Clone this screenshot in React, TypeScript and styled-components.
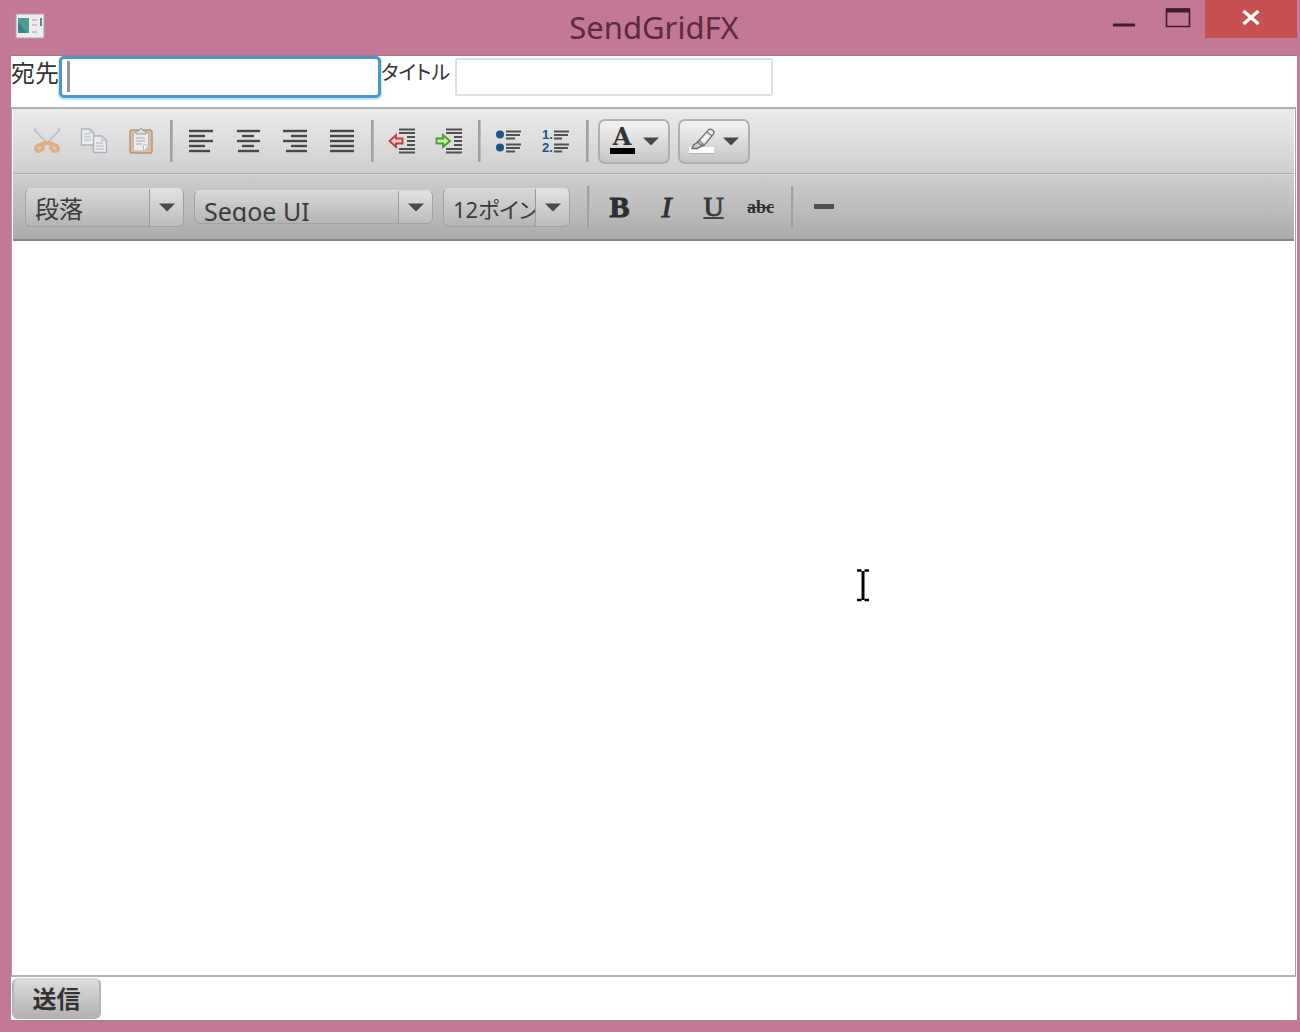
import React from "react";
import styled, { createGlobalStyle } from "styled-components";

const uiFont = `"Noto Sans", "Noto Sans CJK JP", sans-serif`;

const GlobalStyle = createGlobalStyle`
  *, *::before, *::after { box-sizing: border-box; }
  body { margin: 0; font-family: ${uiFont}; color: #333; }
  button, input, select, textarea { font: inherit; color: inherit; margin: 0; }
`;

const Window = styled.div`
  display: flex;
  flex-direction: column;
  min-height: 100vh;
  padding: 0 3px 11px 11px;
  background: #c37895;
`;

const TitleBar = styled.header`
  display: grid;
  grid-template-columns: 1fr auto 1fr;
  height: 56px;
  border-bottom: 1px solid #a3718a;
`;

const AppIcon = styled.svg`
  width: 30px;
  height: 26px;
  margin: 13px 4px;
`;

const WindowTitle = styled.h1`
  margin: 0;
  font-size: 31px;
  font-weight: 400;
  line-height: 54px;
  color: #5a2b42;
`;

const WindowControls = styled.div`
  display: flex;
  justify-content: flex-end;
  align-items: flex-start;
`;

const WindowButton = styled.button<{ $danger?: boolean }>`
  display: flex;
  align-items: center;
  justify-content: center;
  width: ${(p) => (p.$danger ? 92 : 54)}px;
  height: ${(p) => (p.$danger ? 38 : 36)}px;
  padding: 0;
  border: 0;
  background: ${(p) => (p.$danger ? "#c75050" : "transparent")};
`;

const Client = styled.main`
  display: flex;
  flex: 1;
  flex-direction: column;
  background: #fff;
  border-bottom: 1px solid #a97d92;
`;

const AddressRow = styled.div`
  display: flex;
  align-items: flex-start;
  height: 51px;
`;

const FieldLabel = styled.label<{ $width: number; $compact?: boolean }>`
  width: ${(p) => p.$width}px;
  font-size: ${(p) => (p.$compact ? 20 : 24)}px;
  line-height: 34px;
  white-space: nowrap;
  font-feature-settings: "palt";
`;

const FieldWrap = styled.div`
  position: relative;
`;

const TextField = styled.input<{ $active?: boolean }>`
  display: block;
  width: ${(p) => (p.$active ? 322 : 318)}px;
  height: ${(p) => (p.$active ? 42 : 38)}px;
  margin-top: ${(p) => (p.$active ? 0 : 2)}px;
  padding: 0 8px;
  font-size: 24px;
  background: #fff;
  border: ${(p) => (p.$active ? "3px solid #5095ca" : "2px solid #dfdfe2")};
  border-radius: ${(p) => (p.$active ? 5 : 2)}px;
  box-shadow: ${(p) => (p.$active ? "0 1px 1px 1px #b9ecfb" : "none")};
  outline: none;
`;

const Caret = styled.span`
  position: absolute;
  left: 8px;
  top: 5px;
  width: 3px;
  height: 31px;
  background: #97979b;
`;

const Editor = styled.section`
  display: flex;
  flex: 1;
  flex-direction: column;
  position: relative;
  margin-right: 1px;
  border: 1px solid #a3a3a3;
  border-top: 2px solid #b0b0b0;
  border-bottom: 2px solid #b4b4b4;
`;

const Toolbar = styled.div<{ $dark?: boolean }>`
  display: flex;
  align-items: center;
  height: ${(p) => (p.$dark ? 67 : 65)}px;
  margin: 0 1px;
  padding: 0 12px 0 ${(p) => (p.$dark ? 12 : 10)}px;
  background: ${(p) =>
    p.$dark
      ? "linear-gradient(#cecece, #acacac)"
      : "linear-gradient(#ebebeb, #cfcfcf)"};
  border-bottom: ${(p) => (p.$dark ? "2px solid #858585" : "1px solid #aaa")};
  border-top: ${(p) => (p.$dark ? "1px solid #dadada" : "0")};
`;

const separatorMargins = {
  icons: "0 4px 0 6px",
  menus: "0 9px 0 7px",
  styles: "0 6px 0 7px",
};

const Separator = styled.span<{ $before: keyof typeof separatorMargins }>`
  width: 3px;
  height: 42px;
  margin: ${(p) => separatorMargins[p.$before]};
  background: #a0a0a0;
  border-right: 1px solid #b8b8b8;
`;

const ToolButton = styled.button`
  display: flex;
  align-items: center;
  justify-content: center;
  width: 47px;
  height: 40px;
  padding: 0;
  border: 0;
  background: transparent;
`;

const Glyph = styled.span<{ $small?: boolean }>`
  font-family: "Liberation Serif", serif;
  font-size: ${(p) => (p.$small ? 18 : 30)}px;
  line-height: 32px;
  font-weight: 700;
  color: #2e2e2e;

  b& { -webkit-text-stroke: 1px #2e2e2e; }
  i& { font-weight: 400; -webkit-text-stroke: 1px #333; }
  u& {
    font-size: 28px;
    font-weight: 400;
    text-decoration-thickness: 2px;
    -webkit-text-stroke: 1px #444;
  }
`;

const ColorButton = styled.button`
  display: flex;
  align-items: center;
  justify-content: center;
  gap: 8px;
  width: 72px;
  height: 45px;
  margin-right: 8px;
  padding: 0;
  background: linear-gradient(#f3f3f3, #c6c6c6);
  border: 2px solid #b0b0b0;
  border-radius: 7px;
`;

const Swatch = styled.span`
  display: flex;
  flex-direction: column;
  width: 25px;
  font: 700 24px/16px "DejaVu Serif", serif;
  color: #333;
  text-align: center;
  border-bottom: 6px solid #000;
  padding-bottom: 3px;
`;

const Combo = styled.div<{ $width: number; $short?: boolean }>`
  display: flex;
  width: ${(p) => p.$width}px;
  height: ${(p) => (p.$short ? 34 : 39)}px;
  margin-right: 10px;
  background: linear-gradient(#d9d9d9, #b4b4b4);
  border: 1px solid #a2a2a2;
  border-top-color: #dcdcdc;
  border-radius: 6px;
`;

const ComboText = styled.div<{ $short?: boolean }>`
  flex: 1;
  min-width: 0;
  height: ${(p) => (p.$short ? 31 : 37)}px;
  overflow: hidden;
`;

const ComboSelect = styled.select<{ $size: number }>`
  appearance: none;
  width: 200%;
  height: 40px;
  padding: 0 0 0 9px;
  border: 0;
  background: transparent;
  font-size: ${(p) => p.$size}px;
  line-height: 40px;
  color: #3c3c3c;
  font-feature-settings: "palt";
`;

const ComboArrow = styled.span`
  display: flex;
  align-items: center;
  justify-content: center;
  width: 34px;
  border-left: 1px solid #9c9c9c;
  border-radius: 0 5px 5px 0;
  background: linear-gradient(#e2e2e2, #bcbcbc);
`;

const TextArea = styled.textarea`
  flex: 1;
  width: 100%;
  padding: 12px;
  border: 0;
  outline: none;
  resize: none;
  background: #fff;
  font-size: 24px;
`;

const Pointer = styled.svg`
  position: absolute;
  left: 844px;
  top: 459px;
  width: 14px;
  height: 34px;
`;

const SendRow = styled.footer`
  display: flex;
  height: 43px;
  padding: 1px;
`;

const SendButton = styled.button`
  width: 89px;
  height: 41px;
  padding: 0;
  font-size: 24px;
  font-weight: 700;
  line-height: 36px;
  background: linear-gradient(#dcdcdc, #b2b2b2);
  border: 2px solid #b4b4b4;
  border-top-color: #d4d4d4;
  border-radius: 6px;
`;

const Arrow = () => (
  <svg width="16" height="9" viewBox="0 0 16 9" aria-hidden="true">
    <path d="M0 .5h16L8 8.500z" fill="#484848" />
  </svg>
);

type Line = [number, number];

const alignments: { label: string; lines: Line[] }[] = [
  { label: "左揃え", lines: [[0, 24], [0, 16], [0, 24], [0, 16], [0, 21]] },
  { label: "中央揃え", lines: [[1, 24], [6, 18], [1, 24], [6, 18], [2, 23]] },
  { label: "右揃え", lines: [[0, 24], [8, 24], [0, 24], [8, 24], [3, 24]] },
  { label: "両端揃え", lines: [[0, 24], [0, 24], [0, 24], [0, 24], [0, 24]] },
];

const AlignIcon = ({ lines }: { lines: Line[] }) => (
  <svg width="24" height="24" viewBox="0 0 24 24" aria-hidden="true">
    {lines.map(([a, b], i) => (
      <path key={i} d={`M${a} ${2 + i * 5}H${b}`} stroke="#484848" strokeWidth="2.4" />
    ))}
  </svg>
);

const IndentIcon = ({ inward }: { inward?: boolean }) => (
  <svg width="28" height="28" viewBox="0 0 28 28" aria-hidden="true">
    <path
      d="M11 2.500H27M11 6H27M19 10H27M19 14H27M19 18H27M11 22H27M11 25.500H27"
      stroke="#505050"
      strokeWidth="2.200"
    />
    {inward ? (
      <path d="M1.500 11.500H8V8L15 14L8 20V16.500H1.500Z" fill="#c2f09a" stroke="#4d9a32" strokeWidth="1.800" />
    ) : (
      <path d="M14.500 11.500H8V8L1.500 14L8 20V16.500H14.500Z" fill="#f6c6c6" stroke="#c03a40" strokeWidth="1.800" />
    )}
  </svg>
);

const BulletIcon = () => (
  <svg width="28" height="26" viewBox="0 0 28 26" aria-hidden="true">
    <path d="M11 3.500H26M11 7H25M11 10.500H20M11 16.500H26M11 20H25M11 23.500H20" stroke="#505050" strokeWidth="2.200" />
    <circle cx="5" cy="6.500" r="4" fill="#1c5586" />
    <circle cx="5" cy="19.500" r="4" fill="#1c5586" />
  </svg>
);

const NumberMarks = styled.span`
  display: flex;
  flex-direction: column;
  font: 700 13px/13px "Liberation Sans", sans-serif;
  color: #1c5586;
`;

const NumberIcon = () => (
  <>
    <NumberMarks aria-hidden="true">
      <span>1.</span>
      <span>2.</span>
    </NumberMarks>
    <svg width="16" height="26" viewBox="0 0 16 26" aria-hidden="true">
      <path d="M1 3.500H16M1 7H15M1 10.500H9M1 16.500H16M1 20H15M1 23.500H9" stroke="#505050" strokeWidth="2.200" />
    </svg>
  </>
);

const CutIcon = () => (
  <svg width="28" height="28" viewBox="0 0 28 28" fill="none" aria-hidden="true">
    <path d="M1.500 2L17 18M26.500 2L11 18" stroke="#b9bbc4" strokeWidth="3.200" />
    <path d="M3 2.500L17 17M25 2.500L11 17" stroke="#e6e7ec" strokeWidth="1.200" />
    <ellipse cx="6.500" cy="21" rx="4" ry="3" transform="rotate(-30 6.500 21)" fill="#e5c6a2" stroke="#dfb083" strokeWidth="3.400" />
    <ellipse cx="21.500" cy="21" rx="4" ry="3" transform="rotate(30 21.500 21)" fill="#e5c6a2" stroke="#dfb083" strokeWidth="3.400" />
    <path d="M7 18Q14 13.500 21 18" stroke="#dfb083" strokeWidth="4" />
  </svg>
);

const CopyIcon = () => (
  <svg width="28" height="28" viewBox="0 0 28 28" fill="#e9ebef" stroke="#abb2bd" strokeWidth="1.400" aria-hidden="true">
    <path d="M1.500 2H10L14 6V18H1.500Z" />
    <path d="M10 2V6H14M4 7H9M4 10H11M4 13H11" fill="none" stroke="#c3c8d0" />
    <path d="M13.500 9H22L26.500 13.500V25.500H13.500Z" />
    <path d="M22 9V13.500H26.500M16 16H23M16 19H24M16 22H24" fill="none" stroke="#c3c8d0" />
  </svg>
);

const PasteIcon = () => (
  <svg width="28" height="28" viewBox="0 0 28 28" aria-hidden="true">
    <rect x="3" y="3" width="22" height="23" rx="2" fill="#d9bd9d" stroke="#b99673" strokeWidth="1.500" />
    <path d="M6.500 6H21.500V18L16.500 24H6.500Z" fill="#ececee" stroke="#b7b9be" />
    <path d="M21.500 18H16.500V24" fill="#f9f9f9" stroke="#b7b9be" />
    <path d="M9 7V4H11.500Q14 -1 16.500 4H19V7Z" fill="#ddd" stroke="#999" />
    <path d="M9 11H18M9 14H18M9 17H15" stroke="#bbbec4" strokeWidth="1.300" />
  </svg>
);

const HighlightIcon = () => (
  <svg width="26" height="26" viewBox="0 0 26 26" aria-hidden="true">
    <rect x="0" y="19" width="25" height="6" fill="#fff" />
    <path d="M0 25.500H25" stroke="#b4b4b4" />
    <path d="M20 1.500Q22 .5 25 3.500L24.500 6L15 17.500L9 17L8.500 14Z" fill="#f2f2f2" stroke="#777" strokeWidth="1.500" />
    <path d="M10 12L15 17M18 4L23 8" stroke="#777" strokeWidth="1.300" />
    <path d="M9 14L4.500 17L3 20.500H8L13 18Z" fill="#ccc" stroke="#666" strokeWidth="1.300" />
  </svg>
);

interface ComboProps {
  label: string;
  value: string;
  width: number;
  size: number;
  short?: boolean;
}

const ComboBox = ({ label, value, width, size, short }: ComboProps) => (
  <Combo $width={width} $short={short}>
    <ComboText $short={short}>
      <ComboSelect aria-label={label} defaultValue={value} $size={size}>
        <option>{value}</option>
      </ComboSelect>
    </ComboText>
    <ComboArrow>
      <Arrow />
    </ComboArrow>
  </Combo>
);

export default function App() {
  return (
    <>
      <GlobalStyle />
      <Window>
        <TitleBar>
          <AppIcon viewBox="0 0 30 26" aria-hidden="true">
            <rect x="1" y="1" width="28" height="24" fill="#ededf0" stroke="#b2a2ac" />
            <rect x="3" y="5" width="11" height="15" fill="#4f9c93" />
            <path d="M3 20V9L12 20Z" fill="#36838d" />
            <path d="M17 7H22M17 12H22M17 19H22" stroke="#c2c8c8" strokeWidth="2" />
            <path d="M26 5V13" stroke="#60858c" strokeWidth="2" />
          </AppIcon>
          <WindowTitle>SendGridFX</WindowTitle>
          <WindowControls>
            <WindowButton aria-label="最小化">
              <svg width="24" height="20" viewBox="0 0 24 20" aria-hidden="true">
                <path d="M1 17H23" stroke="#401b2e" strokeWidth="3" />
              </svg>
            </WindowButton>
            <WindowButton aria-label="最大化">
              <svg width="26" height="20" viewBox="0 0 26 20" aria-hidden="true">
                <path d="M1.500 1H24.500V18.500H1.500Z" fill="none" stroke="#401b2e" strokeWidth="1.600" />
                <path d="M1 2.500H25" stroke="#401b2e" strokeWidth="4" />
              </svg>
            </WindowButton>
            <WindowButton $danger aria-label="閉じる">
              <svg width="18" height="18" viewBox="0 0 18 18" aria-hidden="true">
                <path d="M1.500 1L16.500 14M16.500 1L1.500 14" stroke="#fff" strokeWidth="3.400" />
              </svg>
            </WindowButton>
          </WindowControls>
        </TitleBar>
        <Client>
          <AddressRow>
            <FieldLabel htmlFor="to" $width={48}>宛先</FieldLabel>
            <FieldWrap>
              <TextField id="to" type="text" $active />
              <Caret />
            </FieldWrap>
            <FieldLabel htmlFor="subject" $width={74} $compact>タイトル</FieldLabel>
            <TextField id="subject" type="text" />
          </AddressRow>
          <Editor>
            <Toolbar>
              <ToolButton aria-label="切り取り"><CutIcon /></ToolButton>
              <ToolButton aria-label="コピー"><CopyIcon /></ToolButton>
              <ToolButton aria-label="貼り付け"><PasteIcon /></ToolButton>
              <Separator $before="icons" />
              {alignments.map((a) => (
                <ToolButton key={a.label} aria-label={a.label}>
                  <AlignIcon lines={a.lines} />
                </ToolButton>
              ))}
              <Separator $before="icons" />
              <ToolButton aria-label="インデント解除"><IndentIcon /></ToolButton>
              <ToolButton aria-label="インデント"><IndentIcon inward /></ToolButton>
              <Separator $before="icons" />
              <ToolButton aria-label="箇条書き"><BulletIcon /></ToolButton>
              <ToolButton aria-label="段落番号"><NumberIcon /></ToolButton>
              <Separator $before="menus" />
              <ColorButton aria-label="文字色">
                <Swatch>A</Swatch>
                <Arrow />
              </ColorButton>
              <ColorButton aria-label="背景色">
                <HighlightIcon />
                <Arrow />
              </ColorButton>
            </Toolbar>
            <Toolbar $dark>
              <ComboBox label="段落形式" value="段落" width={159} size={24} />
              <ComboBox label="フォント" value="Segoe UI" width={239} size={25} short />
              <ComboBox label="サイズ" value="12ポイント" width={127} size={22} />
              <Separator $before="styles" />
              <ToolButton aria-label="太字"><Glyph as="b">B</Glyph></ToolButton>
              <ToolButton aria-label="斜体"><Glyph as="i">I</Glyph></ToolButton>
              <ToolButton aria-label="下線"><Glyph as="u">U</Glyph></ToolButton>
              <ToolButton aria-label="取り消し線"><Glyph as="s" $small>abc</Glyph></ToolButton>
              <Separator $before="styles" />
              <ToolButton aria-label="水平線">
                <svg width="20" height="6" viewBox="0 0 20 6" aria-hidden="true">
                  <rect width="20" height="5" fill="#505050" />
                </svg>
              </ToolButton>
            </Toolbar>
            <TextArea aria-label="本文" />
            <Pointer viewBox="0 0 14 34" aria-hidden="true">
              <path d="M1 2.500H5.500M8.500 2.500H13M1 32H5.500M8.500 32H13" stroke="#000" strokeWidth="2.500" />
              <path d="M7 3V32" stroke="#000" strokeWidth="3" />
            </Pointer>
          </Editor>
          <SendRow>
            <SendButton>送信</SendButton>
          </SendRow>
        </Client>
      </Window>
    </>
  );
}
